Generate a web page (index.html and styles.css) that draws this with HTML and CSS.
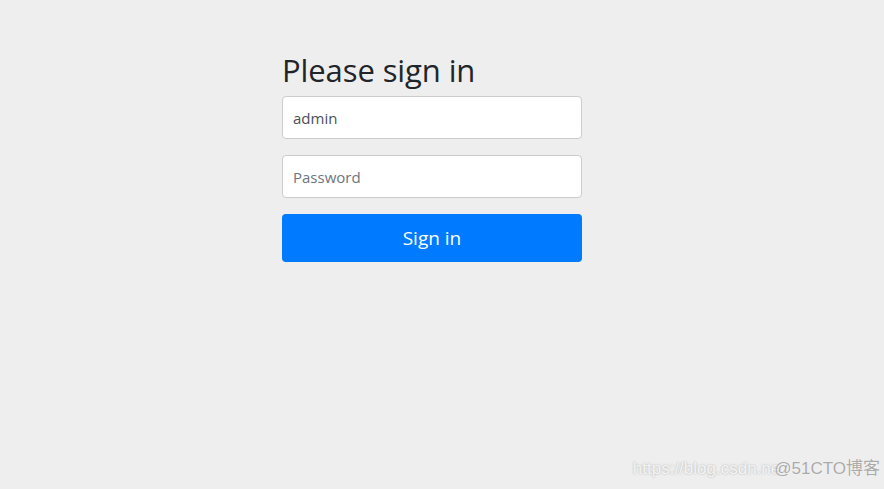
FILE: index.html
```html
<!DOCTYPE html>
<html lang="en">
<head>
<meta charset="utf-8">
<title>Please sign in</title>
<link rel="stylesheet" href="styles.css">
</head>
<body>
<main class="page">
  <form class="signin">
    <h1 class="title">Please sign in</h1>
    <input class="field" type="text" value="admin">
    <input class="field" type="password" placeholder="Password">
    <button class="btn" type="button">Sign in</button>
  </form>
</main>
<div class="watermark"><span class="wm-url">https://blog.csdn.ne</span><span class="wm-site">@51CTO博客</span></div>
</body>
</html>
```
FILE: styles.css
```css
html, body {
  margin: 0;
  padding: 0;
  height: 100%;
}
body {
  background: #eeeeee;
  font-family: "Open Sans", "Noto Sans", sans-serif;
  color: #212529;
  overflow: hidden;
  position: relative;
}
.page {
  padding-top: 49px;
  padding-left: 282px;
}
.signin {
  width: 300px;
  display: flex;
  flex-direction: column;
}
.title {
  margin: 0 0 5px 0;
  font-size: 31px;
  font-weight: 400;
  line-height: 42px;
  letter-spacing: -0.1px;
}
.field {
  box-sizing: border-box;
  height: 43px;
  margin: 0 0 16px 0;
  padding: 0 10px;
  border: 1px solid #cccccc;
  border-radius: 4px;
  background: #fff;
  font-family: inherit;
  font-size: 15px;
  color: #495057;
  outline: none;
}
.field::placeholder {
  color: #6c757d;
}
.btn {
  box-sizing: border-box;
  height: 48px;
  border: none;
  border-radius: 4px;
  background: #007bff;
  color: #fff;
  font-family: inherit;
  font-size: 19px;
}
.watermark {
  position: absolute;
  right: 4px;
  bottom: 10px;
  font-family: "Liberation Sans", "Noto Sans CJK SC", sans-serif;
  font-size: 17px;
  white-space: nowrap;
}
.wm-url {
  color: #f4f4f4;
  text-shadow: 0 0 2px #aaa;
}
.wm-site {
  color: #aaa;
  margin-left: -6px;
  text-shadow: 0 0 1px #fff;
}
```
